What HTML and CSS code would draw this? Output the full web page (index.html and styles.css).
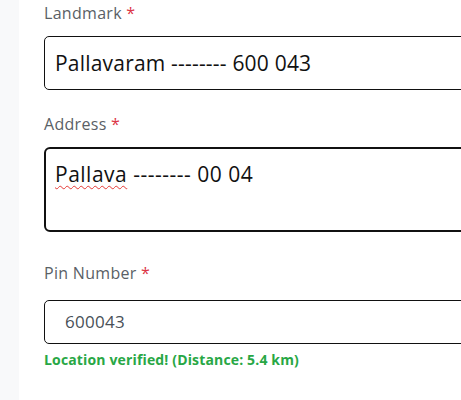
FILE: index.html
```html
<!DOCTYPE html>
<html>
<head>
<meta charset="utf-8">
<link rel="stylesheet" href="styles.css">
</head>
<body>
<div class="layout">
  <aside class="side"></aside>
  <main class="main">
    <div class="field">
      <label class="label">Landmark <span class="req">*</span></label>
      <div class="input input-lg">Pallavaram -------- 600 043</div>
    </div>
    <div class="field field-addr">
      <label class="label">Address <span class="req">*</span></label>
      <div class="input textarea"><span class="misspell">Pallava</span> -------- 00 04</div>
    </div>
    <div class="field field-pin">
      <label class="label label-pin">Pin Number <span class="req">*</span></label>
      <div class="input input-pin">600043</div>
      <div class="ok">Location verified! (Distance: 5.4 km)</div>
    </div>
  </main>
</div>
</body>
</html>
```
FILE: styles.css
```css
html, body {
  margin: 0;
  padding: 0;
  background: #fff;
  font-family: "Open Sans", "Noto Sans", sans-serif;
  overflow: hidden;
}
.layout {
  display: flex;
  height: 400px;
}
.side {
  width: 19px;
  flex: none;
  background: #f8f9fa;
}
.main {
  flex: 1;
  padding: 1px 0 0 25px;
  min-width: 0;
  overflow: hidden;
}
.field {
  display: flex;
  flex-direction: column;
}
.label {
  font-size: 16px;
  letter-spacing: 0.3px;
  line-height: 24px;
  color: #5a5f66;
  margin-bottom: 11px;
}
.req {
  color: #dc3545;
}
.input {
  box-sizing: border-box;
  width: 460px;
  border: 1px solid #111;
  border-radius: 5px;
  color: #111;
}
.input-lg {
  height: 54px;
  font-size: 21px;
  letter-spacing: 0.2px;
  line-height: 52px;
  padding-left: 10px;
}
.field-addr {
  margin-top: 22px;
}
.textarea {
  height: 85px;
  border: 2px solid #111;
  border-radius: 6px;
  font-size: 21px;
  letter-spacing: 0.5px;
  line-height: 28px;
  padding: 11px 0 0 9px;
}
.misspell {
  text-decoration: underline wavy #e53935;
  text-decoration-thickness: 1px;
  text-underline-offset: 3px;
}
.field-pin {
  margin-top: 29px;
}
.label-pin {
  margin-bottom: 15px;
}
.input-pin {
  height: 44px;
  font-size: 17px;
  letter-spacing: 0.3px;
  line-height: 42px;
  padding-left: 20px;
  color: #495057;
}
.ok {
  margin-top: 6px;
  font-size: 14px;
  letter-spacing: 0.15px;
  font-weight: 700;
  color: #28a745;
}
```
